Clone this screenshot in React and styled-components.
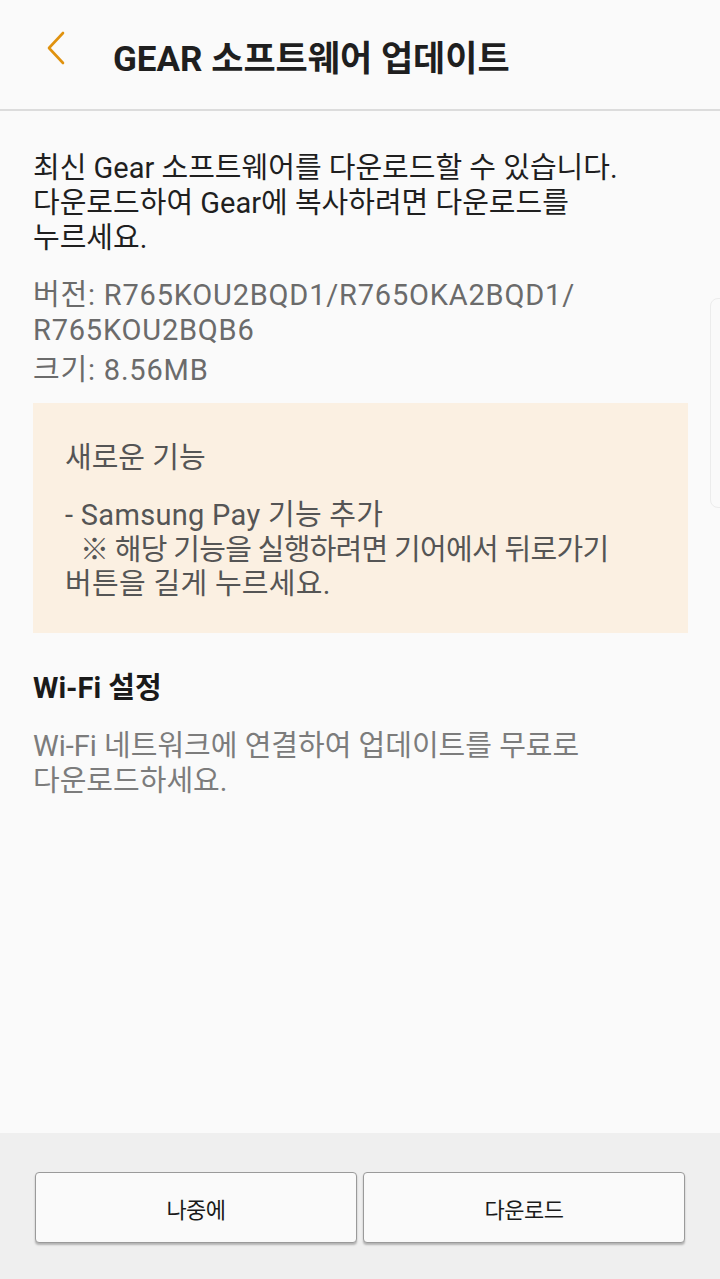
import styled, { createGlobalStyle } from 'styled-components';

const GlobalStyle = createGlobalStyle`
  html, body {
    margin: 0;
    padding: 0;
    background: #fafafa;
  }
  * {
    box-sizing: border-box;
  }
`;

const FONT = `Roboto, "Noto Sans CJK KR", sans-serif`;

const Screen = styled.div`
  position: relative;
  width: 720px;
  height: 1279px;
  display: flex;
  flex-direction: column;
  background: #fafafa;
  font-family: ${FONT};
  overflow: hidden;
`;

const Header = styled.header`
  height: 111px;
  flex-shrink: 0;
  display: flex;
  align-items: center;
  padding: 0 0 0 44px;
  border-bottom: 2px solid #dcdcdc;
`;

const BackButton = styled.button`
  width: 24px;
  height: 36px;
  padding: 0;
  margin: -14px 45px 0 0;
  border: none;
  background: none;
  display: flex;
  align-items: center;
  justify-content: center;
`;

const Title = styled.h1`
  margin: 2px 0 0 0;
  font-size: 35px;
  font-weight: 700;
  color: #1f1f1f;
`;

const Content = styled.main`
  flex: 1;
  padding: 40px 32px 0 33px;
  display: flex;
  flex-direction: column;
`;

const Paragraph = styled.p`
  margin: 0 0 ${(p) => p.$gap || 0}px 0;
  font-size: 29px;
  line-height: 35px;
  color: ${(p) => p.$color || '#1f1f1f'};
  letter-spacing: ${(p) => p.$spacing || 0}px;
`;

const NewsBox = styled.section`
  margin: 15px 0 0 0;
  padding: 38px 32px 30px 32px;
  background: #fbf0e2;
  min-height: 230px;
`;

const NewsTitle = styled.h3`
  margin: 0 0 22px 0;
  font-size: 29px;
  line-height: 35px;
  font-weight: 400;
  color: #555555;
`;

const NewsLine = styled.div`
  font-size: 29px;
  line-height: 34.5px;
  color: #555555;
  padding-left: ${(p) => (p.$indent ? 15 : 0)}px;
  letter-spacing: ${(p) => (p.$tight ? -0.7 : 0.3)}px;
  white-space: nowrap;
`;

const SectionTitle = styled.h2`
  margin: 38px 0 23px 0;
  font-size: 29px;
  line-height: 35px;
  font-weight: 700;
  color: #1a1a1a;
`;

const Footer = styled.footer`
  height: 146px;
  flex-shrink: 0;
  background: #efefef;
  display: flex;
  gap: 6px;
  padding: 39px 35px 0 35px;
`;

const FooterButton = styled.button`
  flex: 1;
  height: 71px;
  border: 1px solid #9a9a9a;
  border-radius: 4px;
  background: #fafafa;
  box-shadow: 0 2px 2px rgba(0, 0, 0, 0.25);
  font-family: ${FONT};
  font-size: 22px;
  color: #1a1a1a;
  letter-spacing: -0.5px;
`;

const EdgeHandle = styled.div`
  position: absolute;
  top: 298px;
  right: -12px;
  width: 22px;
  height: 210px;
  border: 1px solid #ececec;
  border-radius: 8px;
`;

export default function App() {
  return (
    <>
      <GlobalStyle />
      <Screen>
        <Header>
          <BackButton aria-label="뒤로">
            <svg width="20" height="34" viewBox="0 0 20 34">
              <polyline
                points="17,2 3,17 17,32"
                fill="none"
                stroke="#e0920f"
                strokeWidth="2.6"
                strokeLinecap="round"
                strokeLinejoin="round"
              />
            </svg>
          </BackButton>
          <Title>GEAR 소프트웨어 업데이트</Title>
        </Header>
        <Content>
          <Paragraph $gap={22}>
            최신 Gear 소프트웨어를 다운로드할 수 있습니다.
            <br />
            다운로드하여 Gear에 복사하려면 다운로드를
            <br />
            누르세요.
          </Paragraph>
          <Paragraph $color="#6b6b6b" $gap={5} $spacing={0.8}>
            버전: R765KOU2BQD1/R765OKA2BQD1/
            <br />
            R765KOU2BQB6
          </Paragraph>
          <Paragraph $color="#6b6b6b" $spacing={0.8}>크기: 8.56MB</Paragraph>
          <NewsBox>
            <NewsTitle>새로운 기능</NewsTitle>
            <NewsLine>- Samsung Pay 기능 추가</NewsLine>
            <NewsLine $indent $tight>※ 해당 기능을 실행하려면 기어에서 뒤로가기</NewsLine>
            <NewsLine>버튼을 길게 누르세요.</NewsLine>
          </NewsBox>
          <SectionTitle>Wi-Fi 설정</SectionTitle>
          <Paragraph $color="#7c7c7c">
            Wi-Fi 네트워크에 연결하여 업데이트를 무료로
            <br />
            다운로드하세요.
          </Paragraph>
        </Content>
        <Footer>
          <FooterButton>나중에</FooterButton>
          <FooterButton>다운로드</FooterButton>
        </Footer>
        <EdgeHandle />
      </Screen>
    </>
  );
}
